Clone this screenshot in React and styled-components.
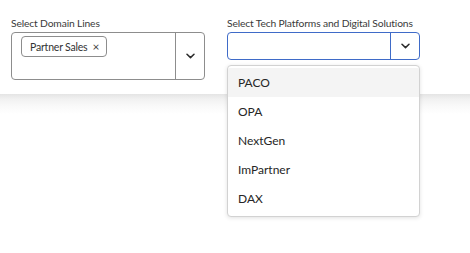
import React from 'react'
import styled, { createGlobalStyle } from 'styled-components'

const GlobalStyle = createGlobalStyle`
  body {
    margin: 0;
    background: #fff;
    font-family: Lato, 'Liberation Sans', sans-serif;
  }
`

const Page = styled.div`
  width: 470px;
  height: 253px;
  overflow: hidden;
`
const Panel = styled.div`
  display: flex;
  gap: 22px;
  height: 94px;
  padding: 15px 0 0 11px;
  box-sizing: border-box;
  background: #fff;
`
const Below = styled.div`
  height: 159px;
  background: linear-gradient(to bottom, #e4e4e4 0px, #f1f1f1 5px, #f9f9f9 12px, #fff 20px);
`
const Field = styled.div`
  position: relative;
  width: ${props => props.width}px;
`
const Label = styled.div`
  font-size: 10.3px;
  letter-spacing: -0.15px;
  white-space: nowrap;
  color: #3a3a3a;
  line-height: 14px;
  margin-bottom: 2px;
  padding-top: 1px;
`
const Box = styled.div`
  display: flex;
  height: ${props => props.height}px;
  box-sizing: border-box;
  border: 1px solid ${props => props.focused ? '#3f6bc8' : '#8d8d8d'};
  border-radius: 4px;
  background: #fff;
`
const Values = styled.div`
  flex: 1;
  padding: 3px 9px;
  display: flex;
  align-items: flex-start;
`
const Toggle = styled.div`
  width: 28px;
  display: flex;
  align-items: center;
  justify-content: center;
  border-left: 1px solid ${props => props.focused ? '#3f6bc8' : '#8d8d8d'};
`
const Tag = styled.div`
  display: flex;
  align-items: center;
  gap: 5px;
  height: 21px;
  padding: 0 7px 0 8px;
  box-sizing: border-box;
  border: 1px solid #8d8d8d;
  border-radius: 4px;
  font-size: 10.5px;
  letter-spacing: -0.2px;
  color: #333;
`
const Remove = styled.span`
  font-size: 12px;
  color: #444;
  line-height: 1;
`
const Menu = styled.div`
  position: absolute;
  top: 50px;
  left: 0;
  width: 100%;
  box-sizing: border-box;
  padding: 2px 0 3px;
  border: 1px solid #d2d2d2;
  border-radius: 4px;
  background: #fff;
  box-shadow: 0 1px 4px rgba(0, 0, 0, 0.12);
  z-index: 2;
`
const Option = styled.div`
  height: 29px;
  display: flex;
  align-items: center;
  padding-left: 10px;
  font-size: 12px;
  color: #262626;
  background: ${props => props.active ? '#f4f4f4' : '#fff'};
`

const Chevron = () => (
  <svg width="9" height="6" viewBox="0 0 9 6">
    <path d="M1 1.2 L4.5 4.6 L8 1.2" fill="none" stroke="#2b2b2b" strokeWidth="1.5" strokeLinecap="round" strokeLinejoin="round" />
  </svg>
)

const options = ['PACO', 'OPA', 'NextGen', 'ImPartner', 'DAX']

const App = () => (
  <Page>
    <GlobalStyle />
    <Panel>
      <Field width={194}>
        <Label>Select Domain Lines</Label>
        <Box height={48}>
          <Values>
            <Tag>Partner Sales <Remove>×</Remove></Tag>
          </Values>
          <Toggle><Chevron /></Toggle>
        </Box>
      </Field>
      <Field width={193}>
        <Label>Select Tech Platforms and Digital Solutions</Label>
        <Box height={28} focused>
          <Values />
          <Toggle focused><Chevron /></Toggle>
        </Box>
        <Menu>
          {options.map((o, i) => (
            <Option key={o} active={i === 0}>{o}</Option>
          ))}
        </Menu>
      </Field>
    </Panel>
    <Below />
  </Page>
)

export default App
